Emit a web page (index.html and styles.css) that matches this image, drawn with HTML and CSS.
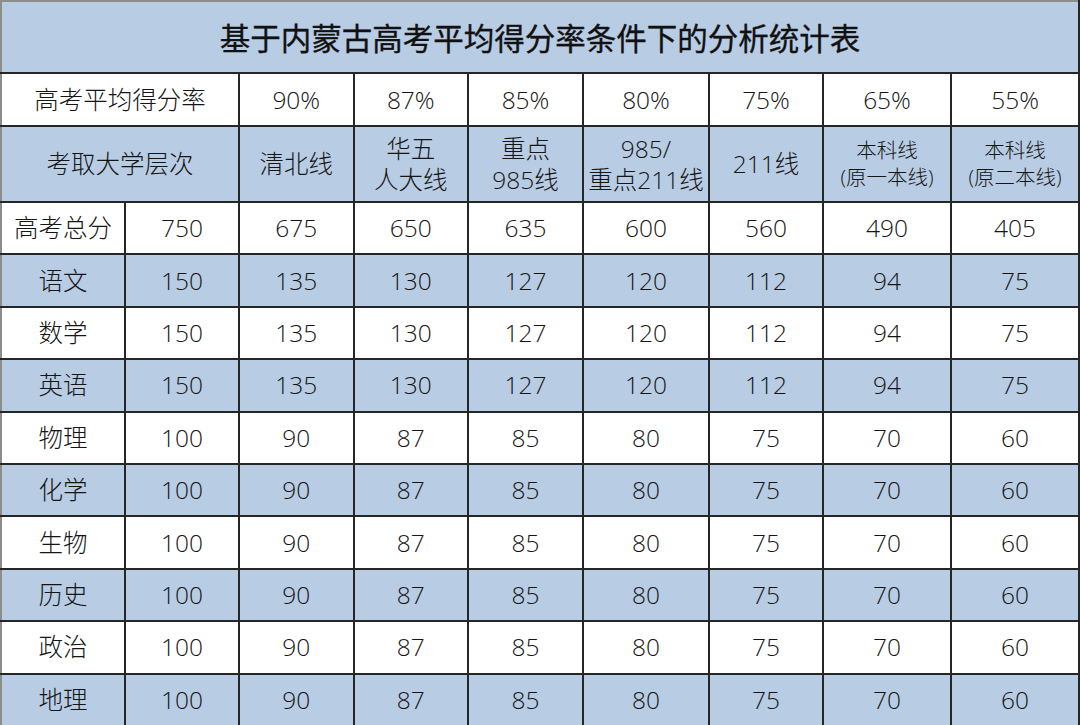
FILE: index.html
```html
<!DOCTYPE html>
<html lang="zh-CN">
<head>
<meta charset="utf-8">
<title>基于内蒙古高考平均得分率条件下的分析统计表</title>
<link rel="stylesheet" href="styles.css">
</head>
<body>
<table class="sheet">
  <colgroup>
    <col class="c-a"><col class="c-b"><col class="c-n"><col class="c-n"><col class="c-m"><col class="c-w"><col class="c-s"><col class="c-x"><col class="c-x">
  </colgroup>
  <tr class="r-title blue"><td colspan="9" class="title">基于内蒙古高考平均得分率条件下的分析统计表</td></tr>
  <tr class="r-rate"><td colspan="2">高考平均得分率</td><td>90%</td><td>87%</td><td>85%</td><td>80%</td><td>75%</td><td>65%</td><td>55%</td></tr>
  <tr class="r-level blue"><td colspan="2">考取大学层次</td><td>清北线</td><td class="two">华五<br>人大线</td><td class="two">重点<br>985线</td><td class="two">985/<br>重点211线</td><td>211线</td><td class="two small">本科线<br>(原一本线)</td><td class="two small">本科线<br>(原二本线)</td></tr>
  <tr class="r"><td>高考总分</td><td>750</td><td>675</td><td>650</td><td>635</td><td>600</td><td>560</td><td>490</td><td>405</td></tr>
  <tr class="r blue"><td>语文</td><td>150</td><td>135</td><td>130</td><td>127</td><td>120</td><td>112</td><td>94</td><td>75</td></tr>
  <tr class="r"><td>数学</td><td>150</td><td>135</td><td>130</td><td>127</td><td>120</td><td>112</td><td>94</td><td>75</td></tr>
  <tr class="r blue"><td>英语</td><td>150</td><td>135</td><td>130</td><td>127</td><td>120</td><td>112</td><td>94</td><td>75</td></tr>
  <tr class="r"><td>物理</td><td>100</td><td>90</td><td>87</td><td>85</td><td>80</td><td>75</td><td>70</td><td>60</td></tr>
  <tr class="r blue"><td>化学</td><td>100</td><td>90</td><td>87</td><td>85</td><td>80</td><td>75</td><td>70</td><td>60</td></tr>
  <tr class="r"><td>生物</td><td>100</td><td>90</td><td>87</td><td>85</td><td>80</td><td>75</td><td>70</td><td>60</td></tr>
  <tr class="r blue"><td>历史</td><td>100</td><td>90</td><td>87</td><td>85</td><td>80</td><td>75</td><td>70</td><td>60</td></tr>
  <tr class="r"><td>政治</td><td>100</td><td>90</td><td>87</td><td>85</td><td>80</td><td>75</td><td>70</td><td>60</td></tr>
  <tr class="r blue"><td>地理</td><td>100</td><td>90</td><td>87</td><td>85</td><td>80</td><td>75</td><td>70</td><td>60</td></tr>
</table>
</body>
</html>
```
FILE: styles.css
```css
html, body {
  margin: 0;
  padding: 0;
  background: #ffffff;
}
body {
  font-family: "Open Sans", "Noto Sans CJK SC", "Noto Sans", sans-serif;
  color: #151515;
}
.sheet {
  width: 1079px;
  border-collapse: collapse;
  table-layout: fixed;
  border-top: 2px solid #8c8c8c;
  border-left: 2px solid #8c8c8c;
  border-right: 2px solid #262626;
  border-bottom: 2px solid #262626;
}
.c-a { width: 124px; }
.c-b { width: 114px; }
.c-n { width: 114.5px; }
.c-m { width: 115px; }
.c-w { width: 126px; }
.c-s { width: 114px; }
.c-x { width: 128px; }
.sheet td {
  border: 2px solid #262626;
  padding: 0;
  text-align: center;
  vertical-align: middle;
  font-size: 24.5px;
  font-weight: 300;
  line-height: 30px;
  white-space: nowrap;
}
.blue td { background: #b8cce4; }
.r-title { height: 72px; }
.sheet .r-title td { border-top-color: #8c8c8c; border-left-color: #8c8c8c; }
.sheet .title {
  font-family: "Noto Sans CJK SC", sans-serif;
  font-size: 30.5px;
  font-weight: 400;
  color: #111;
  -webkit-text-stroke: 0.35px #111;
}
.r-rate { height: 53px; }
.r-level { height: 76px; }
.r { height: 52.4px; }
.sheet tr td:first-child { border-left-color: #8c8c8c; }
.sheet .two { line-height: 31px; }
.sheet .two.small { font-size: 20.5px; line-height: 27px; }
```
